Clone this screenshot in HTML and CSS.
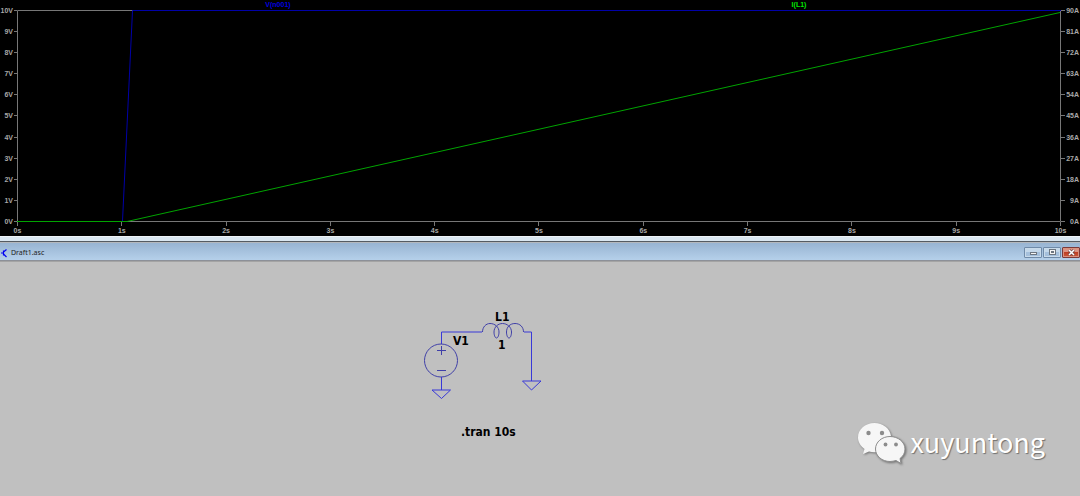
FILE: index.html
```html
<!DOCTYPE html>
<html lang="en">
<head>
<meta charset="utf-8">
<title>Draft1.asc</title>
<link rel="stylesheet" href="styles.css">
</head>
<body>
<section class="plot" aria-label="Waveforms">
  <div class="legend">
    <span class="voltage">V(n001)</span>
    <span class="current">I(L1)</span>
  </div>
  <ul class="axis axis-left">
    <li>10V</li><li>9V</li><li>8V</li><li>7V</li><li>6V</li><li>5V</li><li>4V</li><li>3V</li><li>2V</li><li>1V</li><li>0V</li>
  </ul>
  <svg class="traces" viewBox="0 0 1044 212" preserveAspectRatio="none" aria-hidden="true">
    <path class="frame" d="M.5 .5H1043.5V211.5H.5Z"/>
    <path class="trace-v" d="M105.500 211L115.500 .5H1044"/>
    <path class="trace-i" d="M0 211.5H110L1043 2.5"/>
  </svg>
  <ul class="axis axis-right">
    <li>90A</li><li>81A</li><li>72A</li><li>63A</li><li>54A</li><li>45A</li><li>36A</li><li>27A</li><li>18A</li><li>9A</li><li>0A</li>
  </ul>
  <ul class="axis axis-bottom">
    <li>0s</li><li>1s</li><li>2s</li><li>3s</li><li>4s</li><li>5s</li><li>6s</li><li>7s</li><li>8s</li><li>9s</li><li>10s</li>
  </ul>
</section>
<div class="splitter"></div>
<section class="window">
  <header class="titlebar">
    <svg class="app-icon" viewBox="0 0 8 10" aria-hidden="true"><path d="M1 5H3.500M3.500 2.500V7.500M3.500 4L6.500 1.500M3.500 6L6.500 9"/></svg>
    <h1>Draft1.asc</h1>
    <div class="controls">
      <button type="button" aria-label="Minimize"><svg viewBox="0 0 16 9"><rect class="glyph" x="5.500" y="4.500" width="6" height="2"/></svg></button>
      <button type="button" aria-label="Maximize"><svg viewBox="0 0 16 9"><rect class="glyph" x="5.500" y="1.500" width="6" height="5"/><rect class="hole" x="7.500" y="3.500" width="2" height="1"/></svg></button>
      <button type="button" class="close" aria-label="Close"><svg viewBox="0 0 16 9"><path class="cross-edge" d="M6 2L11 7M11 2L6 7"/><path class="cross" d="M6 2L11 7M11 2L6 7"/></svg></button>
    </div>
  </header>
  <main class="sheet">
    <svg class="schematic" viewBox="0 0 1080 234" role="img" aria-label="Voltage source V1 driving inductor L1">
      <g class="wire">
        <path d="M441.500 82V70H482M524 70H531.500V119M441.500 115V128"/>
        <path d="M432 128H450.500L441.500 136.500ZM522.500 119H541L531.500 128Z"/>
      </g>
      <g class="part">
        <circle cx="441" cy="98.500" r="16.500"/>
        <path d="M437 88.500H446M441.500 84V93M437 108.500H446"/>
        <path d="M482.500 70C482.500 65 486 61.500 490 61.500C495 61.500 499 65 499 70C499 73 498 76 496.500 76C495 76 494 73 494 70C494 65 498 61.500 502.500 61.500C507 61.500 511.500 65 511.500 70C511.500 73 510.500 76 509 76C507.500 76 506.500 73 506.500 70C506.500 65 510 61.500 515 61.500C520 61.500 523.500 65 523.500 70"/>
      </g>
      <g class="label">
        <text x="495" y="59">L1</text>
        <text x="498" y="87">1</text>
        <text x="453" y="83">V1</text>
        <text x="461" y="174">.tran 10s</text>
      </g>
    </svg>
    <div class="watermark">
      <svg viewBox="0 0 50 44" aria-hidden="true">
        <path class="bubble" d="M17.500 1C8 1 1 7.500 1 15.500C1 20 3.500 24 7.500 27L6 32L12 29.500C16 30.500 20 30.500 24 29C32 27 35 21 34 14C33 6.500 26 1 17.500 1Z"/>
        <path class="bubble front" d="M33 14.500C25 14.500 18.500 20 18.500 27C18.500 34 25 39.500 33 39.500C35 39.500 37 39 39 38.500L44 41.500L43 36.500C46 34.500 48 31 48 27C48 20 41 14.500 33 14.500Z"/>
        <g class="eyes"><circle cx="11.500" cy="11" r="2.200"/><circle cx="25" cy="11" r="2.200"/><circle cx="28.500" cy="22.500" r="1.900"/><circle cx="39" cy="22.500" r="1.900"/></g>
      </svg>
      <span>xuyuntong</span>
    </div>
  </main>
</section>
</body>
</html>
```
FILE: styles.css
```css
* { box-sizing: border-box; }
body {
  margin: 0;
  min-height: 100vh;
  display: flex;
  flex-direction: column;
  background: #c0c0c0;
  font-family: "Liberation Sans", Arial, sans-serif;
}
ul { list-style: none; margin: 0; padding: 0; }

.plot {
  display: grid;
  grid-template-columns: 17px 1fr 19px;
  grid-template-rows: 10px 212px 14px;
  background: #000;
  color: #a8a8a8;
  font-size: 7px;
  font-weight: 700;
}
.legend {
  grid-column: 1 / -1;
  display: grid;
  grid-template-columns: 1fr 1fr;
  padding-right: 24px;
  line-height: 10px;
  text-align: center;
}
.legend .voltage { color: #0000e0; padding-left: 28px; }
.legend .current { color: #00e800; padding-left: 14px; }

.axis { display: flex; justify-content: space-between; }
.axis li { display: flex; align-items: center; }
.axis li::before, .axis li::after { background: #777; flex: none; }
.axis-left, .axis-right { flex-direction: column; }
.axis-left li, .axis-right li { height: 0; }
.axis-left li { justify-content: flex-end; gap: 1px; }
.axis-left li::after { content: ""; width: 3px; height: 1px; }
.axis-right li { justify-content: space-between; padding-right: 1px; }
.axis-right li::before { content: ""; width: 4px; height: 1px; }
.axis-bottom { grid-column: 2; }
.axis-bottom li { width: 1px; flex-direction: column; gap: 1px; white-space: nowrap; }
.axis-bottom li::before { content: ""; width: 1px; height: 4px; }

.traces { display: block; width: 100%; height: 100%; }
.traces path { fill: none; stroke-width: 1; vector-effect: non-scaling-stroke; }
.traces .frame { stroke: #777; }
.traces .trace-v { stroke: #0000a8; }
.traces .trace-i { stroke: #00a400; }

.splitter {
  height: 6px;
  background: #d9e6f0;
  border-top: 1px solid #eef3f7;
  border-bottom: 1px solid #555b62;
}
.window { flex: 1; display: flex; flex-direction: column; }
.titlebar {
  display: flex;
  align-items: center;
  height: 19px;
  padding-top: 2px;
  border-top: 1px solid #b4b8bd;
  border-bottom: 1px solid #8c9098;
  background: linear-gradient(#98b4d2, #b5d0ea);
}
.app-icon { width: 8px; height: 10px; fill: none; stroke: #0000f0; stroke-width: 1.2; }
.titlebar h1 {
  margin: 0 auto 0 3px;
  font: 400 7px/12px "Noto Sans", sans-serif;
  color: #222;
}
.controls { display: flex; gap: 1px; }
.controls button {
  width: 18px;
  height: 11px;
  padding: 0;
  border: 1px solid #6f8aa8;
  border-radius: 1px;
  background: linear-gradient(#c4d8ea 50%, #a5c0dc 50%);
  box-shadow: inset 0 0 0 1px #c8daea;
}
.controls svg { display: block; width: 16px; height: 9px; }
.controls .close {
  border-color: #7c3a3a;
  background: linear-gradient(#dd9384 45%, #bd3f25 50%, #cc5a3c);
  box-shadow: inset 0 0 0 1px #d9917f;
}
.glyph { fill: #f4f4f4; stroke: #6d7680; }
.hole { fill: #a5c0dc; stroke: #6d7680; stroke-width: 1; }
.cross, .cross-edge { fill: none; stroke: #fff; stroke-width: 1.5; }
.cross-edge { stroke: #704848; stroke-width: 3; }

.sheet { flex: 1; position: relative; border-top: 1px solid #a4a4a4; }
.schematic { display: block; width: 100%; fill: none; stroke-width: 1; }
.wire { stroke: #3838d8; }
.part { stroke: #4040a8; }
.label { fill: #000; font: 700 12px "DejaVu Sans Condensed", "Noto Sans", sans-serif; }

.watermark {
  position: absolute;
  right: 35px;
  bottom: 30px;
  display: flex;
  align-items: flex-start;
  gap: 3px;
  color: #fff;
  font: 400 27px/40px "Noto Sans CJK SC", "Noto Sans", sans-serif;
  text-shadow: 1px 1px 1px #707070;
}
.watermark svg { width: 50px; height: 44px; filter: drop-shadow(1px 1px 1px #707070); }
.bubble { fill: #f6f6f6; }
.front { stroke: #8c8c8c; stroke-width: 1; }
.eyes { fill: #8c8c8c; }
```
